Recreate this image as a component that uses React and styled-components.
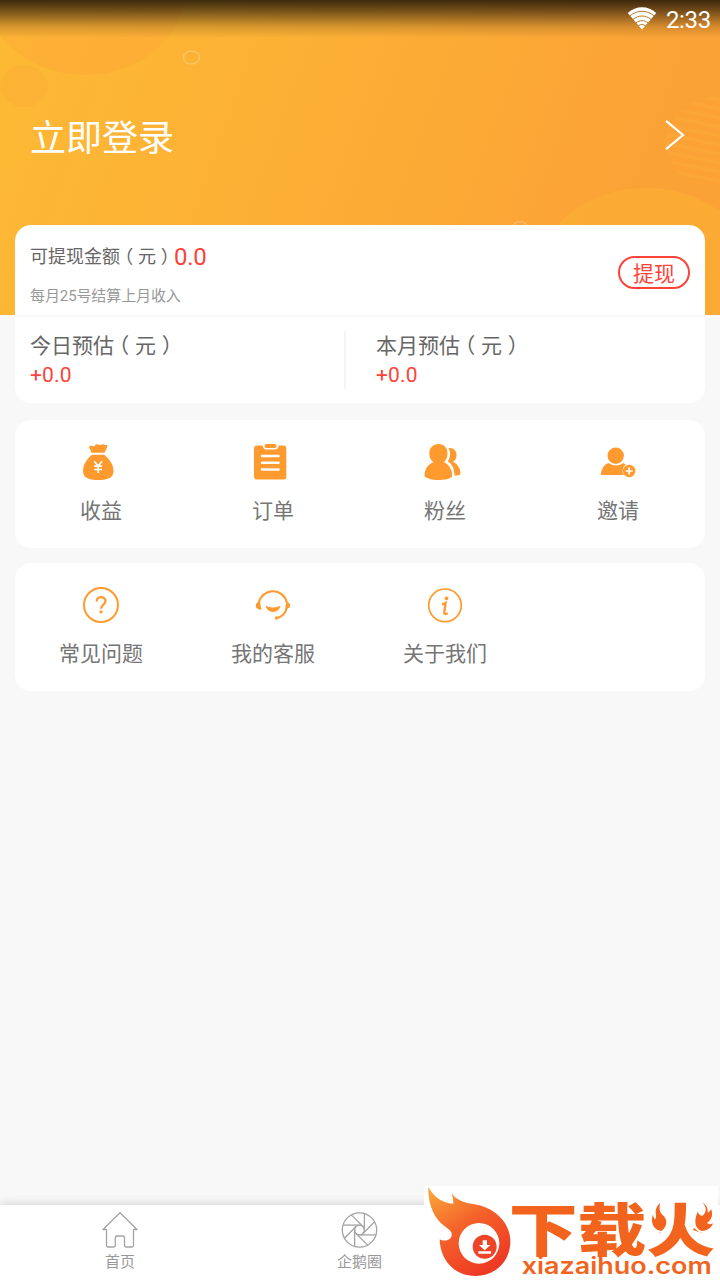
import styled, { createGlobalStyle } from 'styled-components';

const orange = '#ff9a2f';

const menuMain = [
  { label: '收益', Icon: MoneyBagIcon },
  { label: '订单', Icon: ClipboardIcon },
  { label: '粉丝', Icon: FansIcon },
  { label: '邀请', Icon: InviteIcon },
];

const menuHelp = [
  { label: '常见问题', Icon: QuestionIcon },
  { label: '我的客服', Icon: ServiceIcon },
  { label: '关于我们', Icon: InfoIcon },
];

export default function App() {
  return (
    <StyledPage>
      <GlobalStyle />
      <StyledHeader>
        <HeaderArt />
        <StyledStatusBar>
          <WifiIcon />
          <StyledTime>2:33</StyledTime>
        </StyledStatusBar>
        <StyledLogin>
          <StyledLoginText>立即登录</StyledLoginText>
          <ChevronIcon />
        </StyledLogin>
      </StyledHeader>
      <StyledContent>
        <StyledCard>
          <StyledBalance>
            <div>
              <StyledBalanceTitle>
                <StyledBalanceLabel>
                  可提现金额<Yuan />
                </StyledBalanceLabel>
                <StyledBalanceValue>0.0</StyledBalanceValue>
              </StyledBalanceTitle>
              <StyledBalanceNote>每月25号结算上月收入</StyledBalanceNote>
            </div>
            <StyledWithdraw>提现</StyledWithdraw>
          </StyledBalance>
          <StyledEstimates>
            <Estimate label="今日预估" value="+0.0" />
            <Estimate label="本月预估" value="+0.0" />
          </StyledEstimates>
        </StyledCard>
        <Menu items={menuMain} />
        <Menu items={menuHelp} />
      </StyledContent>
      <StyledTabBar>
        <StyledTab>
          <HomeIcon />
          <StyledTabLabel>首页</StyledTabLabel>
        </StyledTab>
        <StyledTab>
          <ApertureIcon />
          <StyledTabLabel>企鹅圈</StyledTabLabel>
        </StyledTab>
        <StyledTab />
        <StyledWatermark>
          <WatermarkLogo />
        </StyledWatermark>
      </StyledTabBar>
    </StyledPage>
  );
}

function Yuan() {
  return (
    <>
      <StyledBracket $shift={-0.27}>（</StyledBracket>元<StyledBracket $shift={0.27}>）</StyledBracket>
    </>
  );
}

function Estimate({ label, value }) {
  return (
    <StyledEstimate>
      <StyledEstimateLabel>
        {label}
        <Yuan />
      </StyledEstimateLabel>
      <StyledEstimateValue>{value}</StyledEstimateValue>
    </StyledEstimate>
  );
}

function Menu({ items }) {
  return (
    <StyledMenu>
      {items.map(({ label, Icon }) => (
        <StyledMenuItem key={label}>
          <Icon />
          <StyledMenuLabel>{label}</StyledMenuLabel>
        </StyledMenuItem>
      ))}
    </StyledMenu>
  );
}

function HeaderArt() {
  return (
    <StyledArt viewBox="0 0 720 315">
      <defs>
        <clipPath id="stripes">
          <ellipse cx="722" cy="143" rx="56" ry="47" />
        </clipPath>
      </defs>
      <ellipse cx="85" cy="-10" rx="100" ry="85" fill="#fca536" opacity="0.4" />
      <ellipse cx="24" cy="86" rx="24" ry="21" fill="#fca536" opacity="0.28" />
      <ellipse cx="191.5" cy="57.5" rx="8" ry="6.5" fill="none" stroke="#fff" strokeWidth="1.6" opacity="0.22" />
      <ellipse cx="520" cy="228" rx="7.5" ry="6.5" fill="none" stroke="#fff" strokeWidth="1.6" opacity="0.22" />
      <ellipse cx="646" cy="283" rx="112" ry="95" fill="#fcb233" opacity="0.55" />
      <g clipPath="url(#stripes)" stroke="#fcb038" strokeWidth="4" opacity="0.35">
        {[88, 97, 106, 115, 124, 133, 142, 151, 160, 169].map((y) => (
          <path key={y} d={`M660 ${y}L730 ${y + 14}`} />
        ))}
      </g>
    </StyledArt>
  );
}

function WifiIcon() {
  return (
    <svg width="30" height="23" viewBox="0 0 30 23" fill="#fff">
      <path d="M.7 6.1C9-1.7 21-1.7 29.3 6.1L15 22.6z" />
      <g fill="none" stroke="#b77b2c" strokeWidth="1">
        <path d="M3 8.8C10 2.8 20 2.8 27 8.8M6 12.4C11.5 7.9 18.5 7.9 24 12.4M9 15.9C13 12.8 17 12.8 21 15.9M11.5 18.7C14 17.2 16 17.2 18.5 18.7" />
      </g>
    </svg>
  );
}

function ChevronIcon() {
  return (
    <svg width="20" height="32" viewBox="0 0 20 32" fill="none" stroke="#fff" strokeWidth="2.2">
      <path d="M1 1.8L18 16 1 30.2" />
    </svg>
  );
}

function MoneyBagIcon() {
  return (
    <StyledIcon viewBox="0 0 36 36" fill={orange}>
      <path d="M8.5 8.8L6.3 3.5C5.9 2 7 1.4 8.2 1.8L11.3 2.5C12 .6 13.3 0 14.5.3C15.5.5 16.2 1 17 1.3C18 .2 20 .1 21 .8L23.5 1C24.7 1.2 24.4 2.5 24 3.5L21.5 8.8z" />
      <path d="M8.8 10.8H21.2C26.5 15 30.5 21 30.5 27C30.5 33.5 25.5 36 15.2 36S0 33.5 0 27C0 21 3.8 15 8.8 10.8z" />
      <path d="M11.3 17.3L15.2 22 19.1 17.3M15.2 22V29M11.3 22.2H19.1M11.3 25.5H19.1" fill="none" stroke="#fff" strokeWidth="1.7" />
    </StyledIcon>
  );
}

function ClipboardIcon() {
  return (
    <StyledIcon viewBox="0 0 36 36" fill={orange}>
      <path d="M2 1.5H7.5Q8.5 5.5 11 5.5H20Q23 5.5 23.8 1.5H28.5Q31.3 1.5 31.3 4.5V33Q31.3 35.5 28.5 35.5H2Q-1 35.5-1 33V4.5Q-1 1.5 2 1.5z" />
      <rect x="9.5" y="0" width="12" height="4" rx="1.8" />
      <path d="M7 12H23.5M7 18.7H23.5M7 25.4H23.5" stroke="#fff" strokeWidth="2.5" strokeLinecap="round" />
    </StyledIcon>
  );
}

function FansIcon() {
  return (
    <StyledIcon viewBox="0 0 36 36" fill={orange}>
      <path d="M21.5 4.2C26.5 3.5 30 7 29.5 12C29.3 14.7 28 16.5 26 17.9C30.5 19.5 33.5 24 33.5 30.2C32 31.3 30 31.7 27.5 31.5C27.5 25 25 20 20.8 17.5C23.5 13.5 23.9 8.5 21.5 4.2z" />
      <path d="M11.5 0C17 0 20.5 4 20.5 9.2C20.5 13.5 19 16.5 16.7 18.2C22 20 25.3 25.5 25.2 32.5C23 35 17.5 36 11.2 36C5 36-.5 34.5-2.5 32C-2.5 25 1 20 6.5 18.2C4 16.5 2.3 13.5 2.3 9.2C2.3 4 6 0 11.5 0z" />
    </StyledIcon>
  );
}

function InviteIcon() {
  return (
    <StyledIcon viewBox="0 0 36 36" fill={orange}>
      <circle cx="15.7" cy="11.8" r="8.2" />
      <path d="M.8 31C1.5 24.5 4 20.5 8.5 19C13 22.2 19 22.2 23.5 19L26 20.7C22.5 22.7 21.5 27.5 24 31z" />
      <circle cx="29.2" cy="27" r="6.2" />
      <path d="M29.2 23.5V30.5M25.7 27H32.7" stroke="#fff" strokeWidth="1.7" />
    </StyledIcon>
  );
}

function QuestionIcon() {
  return (
    <StyledIcon viewBox="0 0 36 36" fill="none" stroke={orange} strokeWidth="2">
      <circle cx="18" cy="18" r="17" />
      <path d="M13.7 14.5C13.7 8.6 22.5 8.8 22.5 14C22.5 17.8 18.2 17.5 18.1 21.7" strokeWidth="2.3" />
      <circle cx="18" cy="24.9" r="1.6" fill={orange} stroke="none" />
    </StyledIcon>
  );
}

function ServiceIcon() {
  return (
    <StyledIcon viewBox="0 0 36 36" fill={orange}>
      <path d="M4 15.5A14.2 14.2 0 0 1 31.8 15.5M31.8 21C30.5 26.5 27 29.8 22 31" fill="none" stroke={orange} strokeWidth="2" />
      <path d="M4.5 13.5L6.5 22.5C4 23 3 22 2.5 21.5C.2 21 .3 16.5 2.5 15.5zM31.5 13.5L33 15.5C35.8 16.5 35.8 20.5 33.5 21L30 22.5z" />
      <path d="M10.5 18.5C14 21 22 21 25.6 18.5C24 27 12 27 10.5 18.5z" />
      <circle cx="21.5" cy="31" r="1.7" />
    </StyledIcon>
  );
}

function InfoIcon() {
  return (
    <StyledIcon viewBox="0 0 36 36" fill="none" stroke={orange} strokeWidth="1.7">
      <circle cx="18" cy="18.3" r="16.3" />
      <circle cx="19.5" cy="11.3" r="1.9" fill={orange} stroke="none" />
      <path d="M15 17.2Q17 17 18.6 16L17.3 25Q16.8 28.3 20.8 26.2" strokeWidth="2.3" />
    </StyledIcon>
  );
}

function HomeIcon() {
  return (
    <svg width="36" height="38" viewBox="0 0 36 38" fill="none" stroke="#a3a3a3" strokeWidth="1.3" strokeLinejoin="round">
      <path d="M4.5 18.5H1L18 1.7 35 18.5H31.5V34.5Q31.5 36 30 36H24Q22.5 36 22.5 34.5V26.5Q22.5 25 21 25H15Q13.3 25 13.3 26.5V34.5Q13.3 36 12 36H6Q4.5 36 4.5 34.5z" />
    </svg>
  );
}

function ApertureIcon() {
  return (
    <svg width="38" height="38" viewBox="-18.5 -19 38 38" fill="none" stroke="#a3a3a3" strokeWidth="1.3">
      <circle r="17.2" />
      <circle r="4.9" />
      {[0, 45, 90, 135, 180, 225, 270, 315].map((angle) => (
        <path key={angle} d="M-16.5-4.9H0" transform={`rotate(${angle})`} />
      ))}
    </svg>
  );
}

function WatermarkLogo() {
  return (
    <svg width="294" height="94" viewBox="42 18 882 282">
      <defs>
        <linearGradient id="flame" x1="0" y1="0" x2="0.6" y2="1">
          <stop offset="0" stopColor="#fbab3c" />
          <stop offset="0.5" stopColor="#f4622a" />
          <stop offset="1" stopColor="#ee3a24" />
        </linearGradient>
      </defs>
      <path
        fill="url(#flame)"
        d="M55 20C72 52 96 68 130 71C130 58 128 48 124 38C138 60 160 67 190 72C255 82 301 128 301 184C301 244 256 288 196 288C133 288 90 240 89 178C100 185 118 182 124 170C130 155 117 148 102 137C72 114 53 72 55 20z"
      />
      <circle cx="207" cy="190" r="61" fill="#fff" />
      <circle cx="224" cy="200" r="36" fill="#ee4528" />
      <path d="M218 181H231V195H241L224 211 207 195H218zM205 214H243V221H205z" fill="#fff" />
      <text x="0" y="0" transform="translate(296 213) scale(1.2 1)" fontFamily='"Noto Sans CJK SC", sans-serif' fontWeight="900" fontSize="172" fill="#f2641d">
        下载火
      </text>
      <path d="M716 60H780V140L752 158H716zM842 60H916V158H870L842 136z" fill="#fff" />
      <g fill="#f2641d">
        <path d="M751 68C726 91 745 105 735 119C731 113 729 107 729 103C720 128 731 151 754 153C776 137 771 116 758 105C747 94 747 82 751 68z" />
        <path d="M878 68C895 86 885 102 876 108C866 104 864 100 864 94C852 117 852 147 875 153C893 153 906 141 909 130C901 134 895 133 891 129C908 118 909 100 903 87C900 94 896 96 893 98C894 82 889 74 878 68z" />
      </g>
      <text x="335" y="282" textLength="570" lengthAdjust="spacingAndGlyphs" fontFamily="Inter, sans-serif" fontWeight="600" fontSize="68" fill="#f2641d">
        xiazaihuo.com
      </text>
    </svg>
  );
}

const GlobalStyle = createGlobalStyle`
  * {
    box-sizing: border-box;
  }
  body {
    margin: 0;
    background-color: #f8f8f8;
    font-family: Roboto, "Noto Sans CJK SC", sans-serif;
  }
  svg {
    display: block;
    flex-shrink: 0;
  }
`;

const StyledPage = styled.div`
  width: 720px;
  height: 1280px;
  display: flex;
  flex-direction: column;
  overflow: hidden;
`;

const StyledHeader = styled.header`
  height: 315px;
  flex-shrink: 0;
  position: relative;
  background: linear-gradient(110deg, #fdba34 0%, #fcae35 45%, #fba236 85%, #fba236 100%);
`;

const StyledArt = styled.svg`
  position: absolute;
  top: 0;
  left: 0;
  width: 100%;
  height: 100%;
`;

const StyledStatusBar = styled.div`
  height: 38px;
  position: relative;
  display: flex;
  justify-content: flex-end;
  align-items: flex-start;
  gap: 9px;
  padding: 7px 9px 0 0;
  background: linear-gradient(rgba(0, 0, 0, 0.76), rgba(0, 0, 0, 0.52) 30%, rgba(0, 0, 0, 0.15) 70%, rgba(0, 0, 0, 0));
`;

const StyledTime = styled.span`
  font-size: 24px;
  line-height: 26px;
  letter-spacing: -0.3px;
  color: #fff;
`;

const StyledLogin = styled.div`
  height: 194px;
  position: relative;
  display: flex;
  justify-content: space-between;
  align-items: center;
  padding: 0 35px 0 30px;
`;

const StyledLoginText = styled.span`
  padding-top: 7px;
  font-size: 36px;
  line-height: 48px;
  color: #fff;
`;

const StyledContent = styled.main`
  flex: 1;
  position: relative;
  margin-top: -90px;
  padding: 0 15px;
  display: flex;
  flex-direction: column;
  gap: 15px;
`;

const StyledCard = styled.section`
  height: 178px;
  margin-bottom: 2px;
  background-color: #fff;
  border-radius: 16px;
  overflow: hidden;
`;

const StyledBalance = styled.div`
  height: 92px;
  display: flex;
  justify-content: space-between;
  align-items: flex-start;
  padding: 15px 15px 0;
  border-bottom: 2px solid #f7f7f7;
`;

const StyledBalanceTitle = styled.div`
  height: 34px;
  display: flex;
  color: #666;
  white-space: nowrap;
`;

const StyledBalanceLabel = styled.span`
  flex-shrink: 0;
  font-size: 18px;
  line-height: 34px;
`;

/* pulls a full-width bracket to the middle of its cell */
const StyledBracket = styled.span`
  margin-left: ${({ $shift }) => $shift}em;
  margin-right: ${({ $shift }) => -$shift}em;
`;

const StyledBalanceValue = styled.span`
  font-size: 24px;
  line-height: 35px;
  letter-spacing: -0.3px;
  color: #fd4339;
`;

const StyledBalanceNote = styled.div`
  margin-top: 11px;
  font-size: 15px;
  line-height: 22px;
  letter-spacing: -0.1px;
  color: #999;
`;

const StyledWithdraw = styled.button`
  width: 72px;
  height: 33px;
  margin-top: 16px;
  padding: 2px 0 0;
  border: 2px solid #fd4339;
  border-radius: 17px;
  background: none;
  font-family: inherit;
  font-size: 21px;
  line-height: 29px;
  color: #fd4339;
`;

const StyledEstimates = styled.div`
  display: flex;
  padding: 14px 0;
`;

const StyledEstimate = styled.div`
  height: 58px;
  flex: 1;
  padding-left: 16px;
  &:first-child {
    flex: 0 0 345px;
    padding-left: 15px;
    background: linear-gradient(#f5f5f5, #f5f5f5) 329px 0 / 2px 100% no-repeat;
  }
`;

const StyledEstimateLabel = styled.div`
  font-size: 21px;
  line-height: 30px;
  white-space: nowrap;
  color: #666;
`;

const StyledEstimateValue = styled.div`
  font-size: 21px;
  line-height: 28px;
  letter-spacing: 0.2px;
  color: #fd4339;
`;

const StyledMenu = styled.section`
  height: 128px;
  flex-shrink: 0;
  display: grid;
  grid-template-columns: repeat(3, 172px) 1fr;
  padding-top: 24px;
  background-color: #fff;
  border-radius: 16px;
`;

const StyledMenuItem = styled.div`
  display: flex;
  flex-direction: column;
  align-items: center;
`;

const StyledMenuLabel = styled.span`
  margin-top: 16px;
  font-size: 21px;
  line-height: 30px;
  color: #757575;
`;

const StyledIcon = styled.svg`
  width: 36px;
  height: 36px;
  overflow: visible;
`;

const StyledTabBar = styled.nav`
  height: 75px;
  flex-shrink: 0;
  position: relative;
  display: grid;
  grid-template-columns: 240px 239px 1fr;
  background-color: #fff;
  box-shadow: 0 -1px 9px rgba(0, 0, 0, 0.16);
`;

const StyledTab = styled.div`
  display: flex;
  flex-direction: column;
  align-items: center;
  padding-top: 6px;
`;

const StyledTabLabel = styled.span`
  margin-top: 2px;
  font-size: 15px;
  line-height: 22px;
  color: #999;
`;

const StyledWatermark = styled.div`
  position: absolute;
  right: 2px;
  bottom: 0;
  width: 294px;
  height: 94px;
  background-color: #fff;
`;
